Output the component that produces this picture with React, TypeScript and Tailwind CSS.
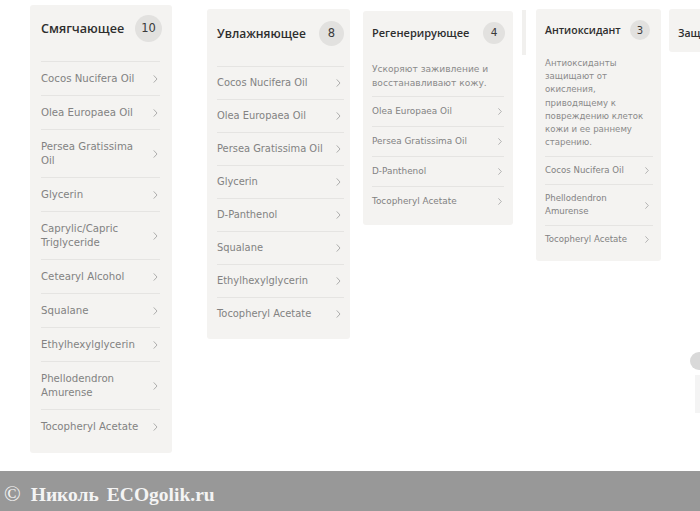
import React from "react";

const Chevron = ({ cls }: { cls: string }) => (
  <svg viewBox="0 0 5 9" className={cls} fill="none">
    <polyline points="0.8,0.8 4.2,4.5 0.8,8.2" stroke="#9a9a9a" strokeWidth="0.9" strokeLinecap="round" strokeLinejoin="round" />
  </svg>
);

type Row = { lines: string[] };

const font = { fontFamily: '"DejaVu Sans", sans-serif' };
const head = { fontFamily: '"Open Sans", "DejaVu Sans", sans-serif' };

export default function App() {
  const c1: Row[] = [
    { lines: ["Cocos Nucifera Oil"] },
    { lines: ["Olea Europaea Oil"] },
    { lines: ["Persea Gratissima", "Oil"] },
    { lines: ["Glycerin"] },
    { lines: ["Caprylic/Capric", "Triglyceride"] },
    { lines: ["Cetearyl Alcohol"] },
    { lines: ["Squalane"] },
    { lines: ["Ethylhexylglycerin"] },
    { lines: ["Phellodendron", "Amurense"] },
    { lines: ["Tocopheryl Acetate"] },
  ];
  const c2 = [
    "Cocos Nucifera Oil",
    "Olea Europaea Oil",
    "Persea Gratissima Oil",
    "Glycerin",
    "D-Panthenol",
    "Squalane",
    "Ethylhexylglycerin",
    "Tocopheryl Acetate",
  ];
  const c3 = ["Olea Europaea Oil", "Persea Gratissima Oil", "D-Panthenol", "Tocopheryl Acetate"];
  const c4: Row[] = [
    { lines: ["Cocos Nucifera Oil"] },
    { lines: ["Phellodendron", "Amurense"] },
    { lines: ["Tocopheryl Acetate"] },
  ];
  const d4 = [
    "Антиоксиданты",
    "защищают от",
    "окисления,",
    "приводящему к",
    "повреждению клеток",
    "кожи и ее раннему",
    "старению.",
  ];

  return (
    <div className="w-[700px] h-[511px] overflow-hidden bg-white flex flex-col" style={font}>
      <div className="h-[471px] flex items-start relative">
        {/* Card 1 */}
        <div className="ml-[30px] mt-[5px] w-[142px] shrink-0 bg-[#f4f3f1] rounded-[3px] pl-[11px] pr-[12px] pb-[10px]">
          <div className="h-[56px] pt-[10px] flex items-start justify-between">
            <span style={head} className="text-[12.6px] font-semibold leading-[27px] text-[#2e2e2e]">Смягчающее</span>
            <span className="w-[27px] h-[27px] -mr-[2px] rounded-full bg-[#e2e1df] flex items-center justify-center text-[11.5px] text-[#3a3a3a]">10</span>
          </div>
          {c1.map((r, i) => (
            <div
              key={i}
              className={`border-t border-[#e5e4e2] flex items-center justify-between ${r.lines.length > 1 ? "h-[48px]" : "h-[34px]"}`}
            >
              <div className="text-[10.2px] leading-[14px] text-[#828282]">
                {r.lines.map((l, j) => (
                  <div key={j} className="whitespace-nowrap">{l}</div>
                ))}
              </div>
              <Chevron cls="w-[5px] h-[8px] mr-[2px]" />
            </div>
          ))}
        </div>

        {/* Card 2 */}
        <div className="ml-[35px] mt-[9px] w-[143px] shrink-0 bg-[#f4f3f1] rounded-[3px] pl-[10px] pr-[6px] pb-[9px]">
          <div className="h-[57px] pt-[12px] flex items-start justify-between">
            <span style={head} className="text-[12px] font-semibold leading-[25px] text-[#2e2e2e]">Увлажняющее</span>
            <span className="w-[25px] h-[25px] rounded-full bg-[#e2e1df] flex items-center justify-center text-[11.5px] text-[#3a3a3a]">8</span>
          </div>
          {c2.map((t, i) => (
            <div key={i} className="border-t border-[#e5e4e2] flex items-center justify-between h-[33px]">
              <span className="text-[9.9px] leading-[14px] text-[#828282] whitespace-nowrap">{t}</span>
              <Chevron cls="w-[5px] h-[8px] mr-[3px]" />
            </div>
          ))}
        </div>

        {/* Card 3 */}
        <div className="ml-[13px] mt-[11px] w-[150px] shrink-0 bg-[#f4f3f1] rounded-[3px] pl-[9px] pr-[9px] pb-[9px]">
          <div className="pt-[11px] flex items-start justify-between">
            <span style={head} className="text-[11px] font-semibold leading-[22px] text-[#2e2e2e]">Регенерирующее</span>
            <span className="w-[22px] h-[22px] -mr-[1px] rounded-full bg-[#e2e1df] flex items-center justify-center text-[10.5px] text-[#3a3a3a]">4</span>
          </div>
          <div className="pt-[18px] pb-[6px] text-[9.1px] leading-[14px] text-[#8a8a8a]">
            <div className="whitespace-nowrap">Ускоряют заживление и</div>
            <div className="whitespace-nowrap">восстанавливают кожу.</div>
          </div>
          {c3.map((t, i) => (
            <div key={i} className="border-t border-[#e5e4e2] flex items-center justify-between h-[30px]">
              <span className="text-[8.9px] leading-[13px] text-[#828282] whitespace-nowrap">{t}</span>
              <Chevron cls="w-[4px] h-[7px] mr-[2px]" />
            </div>
          ))}
        </div>

        {/* Card 4 */}
        <div className="ml-[23px] mt-[9px] w-[125px] shrink-0 bg-[#f4f3f1] rounded-[3px] pl-[9px] pr-[8px] pb-[8px]">
          <div className="pt-[11px] flex items-start justify-between">
            <span style={head} className="text-[10.5px] font-semibold leading-[20px] text-[#2e2e2e]">Антиоксидант</span>
            <span className="w-[20px] h-[20px] mr-[3px] rounded-full bg-[#e2e1df] flex items-center justify-center text-[10px] text-[#3a3a3a]">3</span>
          </div>
          <div className="pt-[17px] pb-[7px] text-[8.6px] leading-[13.2px] text-[#8a8a8a]">
            {d4.map((l, i) => (
              <div key={i} className="whitespace-nowrap">{l}</div>
            ))}
          </div>
          {c4.map((r, i) => (
            <div
              key={i}
              className={`border-t border-[#e5e4e2] flex items-center justify-between ${r.lines.length > 1 ? "h-[41px]" : "h-[28px]"}`}
            >
              <div className="text-[8.6px] leading-[13px] text-[#828282]">
                {r.lines.map((l, j) => (
                  <div key={j} className="whitespace-nowrap">{l}</div>
                ))}
              </div>
              <Chevron cls="w-[4px] h-[7px] mr-[4px]" />
            </div>
          ))}
        </div>

        {/* Card 5 (partial) */}
        <div className="ml-[8px] mt-[9px] w-[31px] h-[43px] shrink-0 bg-[#f4f3f1] rounded-l-[3px] pl-[9px] pt-[11px] overflow-hidden">
          <span style={head} className="text-[10.5px] font-semibold leading-[20px] text-[#2e2e2e] whitespace-nowrap">Защ</span>
        </div>

        {/* collage artifacts */}
        <div className="absolute left-[522px] top-[10px] w-[4px] h-[45px] bg-[#f1f0ee]" />
        <div className="absolute left-[690px] top-[352px] w-[18px] h-[18px] rounded-full bg-[#d9d9d9]" />
        <div className="absolute left-[695px] top-[375px] w-[6px] h-[38px] bg-[#f4f4f4]" />
      </div>

      {/* Footer */}
      <div className="h-[40px] bg-[#989898] flex items-center pl-[4px] pt-[4px]">
        <span
          className="text-[19.5px] font-bold text-[#f4f4f4] whitespace-nowrap flex items-baseline"
          style={{ fontFamily: '"Liberation Serif", serif' }}
        >
          <span className="font-normal text-[22px] mr-[10px]">©</span>
          <span className="mr-[8px]">Николь</span>
          <span>ECOgolik.ru</span>
        </span>
      </div>
    </div>
  );
}
